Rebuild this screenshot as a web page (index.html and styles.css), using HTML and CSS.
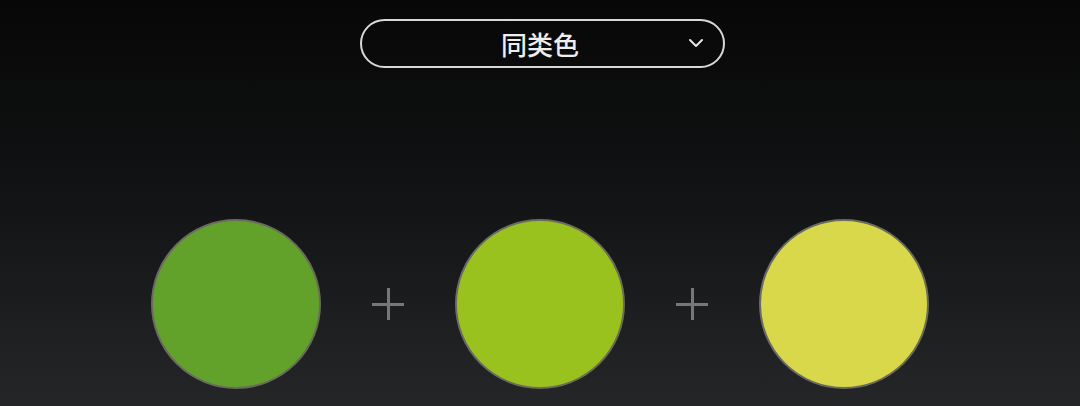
FILE: index.html
```html
<!DOCTYPE html>
<html lang="zh-CN">
<head>
  <meta charset="UTF-8">
  <title>同类色</title>
  <link rel="stylesheet" href="styles.css">
</head>
<body>
  <div class="page">
    <div class="picker">
      <span class="picker-label">同类色</span>
      <svg class="picker-arrow" width="16" height="10" viewBox="0 0 16 10">
        <path d="M2 2 L8 8 L14 2" fill="none" stroke="#e6e6e6" stroke-width="2" stroke-linecap="round" stroke-linejoin="round"/>
      </svg>
    </div>
    <div class="swatches">
      <div class="swatch green"></div>
      <div class="plus"></div>
      <div class="swatch lime"></div>
      <div class="plus"></div>
      <div class="swatch yellow"></div>
    </div>
  </div>
</body>
</html>
```

FILE: styles.css
```css
* {
  padding: 0;
  margin: 0;
  box-sizing: border-box;
}
html, body {
  height: 100%;
}
body {
  background: linear-gradient(to bottom, #070707 0%, #111213 45%, #252628 100%);
  font-family: "Noto Sans CJK SC", "Noto Sans", sans-serif;
  overflow: hidden;
}
.page {
  display: flex;
  flex-direction: column;
  align-items: center;
  padding-top: 19px;
}
.picker {
  position: relative;
  width: 365px;
  height: 49px;
  margin-left: 4px;
  border: 2px solid #d8d8d8;
  border-radius: 25px;
  display: flex;
  align-items: center;
  justify-content: center;
}
.picker-label {
  color: #eeeeee;
  font-size: 26px;
  font-weight: 500;
  line-height: 1;
  margin-right: 4px;
}
.picker-arrow {
  position: absolute;
  right: 19px;
  top: 17px;
}
.swatches {
  display: flex;
  align-items: center;
  gap: 51px;
  margin-top: 151px;
}
.swatch {
  width: 170px;
  height: 170px;
  border-radius: 50%;
  border: 2px solid #6b6b5e;
}
.green {
  background-color: #62a12a;
}
.lime {
  background-color: #9ac21f;
}
.yellow {
  background-color: #d9d84a;
}
.plus {
  position: relative;
  width: 32px;
  height: 32px;
}
.plus::before,
.plus::after {
  content: "";
  position: absolute;
  background-color: #777777;
}
.plus::before {
  left: 0;
  top: 14.5px;
  width: 32px;
  height: 3px;
}
.plus::after {
  left: 14.5px;
  top: 0;
  width: 3px;
  height: 32px;
}
```
